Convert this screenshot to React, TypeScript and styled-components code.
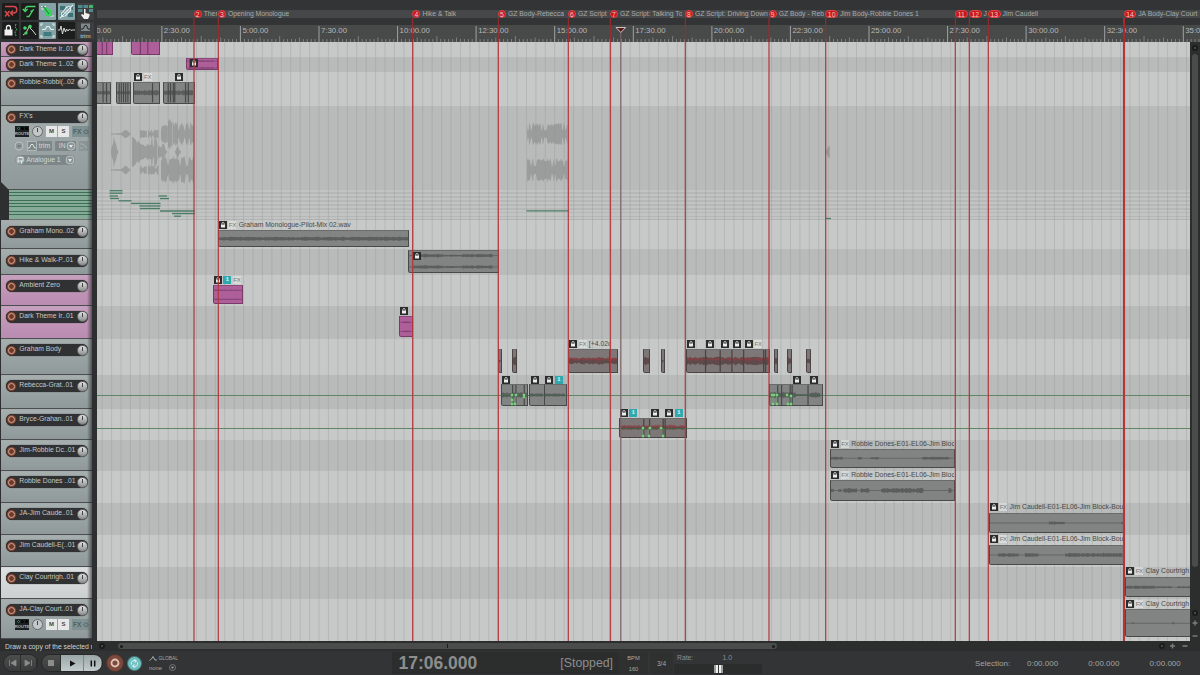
import React from 'react';
import styled, { createGlobalStyle, css } from 'styled-components';

const Global = createGlobalStyle`
  * { box-sizing: border-box; }
  body { margin: 0; background: #333; overflow: hidden; }
  #root { font-family: "Liberation Sans", Arial, sans-serif; }
`;

/* ---------- time mapping ---------- */
const LEFT = 97;
const ORIGIN = 83.3;
const STEP = 78.57;
const px = (x: number) => x - LEFT;

/* ---------- frame ---------- */
const Window = styled.div`
  width: 1200px; height: 675px; display: grid;
  grid-template-rows: 641px 10px 24px;
  background: #333435; color: #b4b4b4; font-size: 6.8px; overflow: hidden;
`;
const Workspace = styled.div`display: grid; grid-template-columns: 97px 1103px; min-height: 0;`;
const Sidebar = styled.div`display: grid; grid-template-rows: 42px 599px; background: #2e2f30; overflow: hidden;`;
const Arrange = styled.div`position: relative; display: grid; grid-template-rows: 42px 599px; overflow: hidden;`;

/* ---------- toolbar ---------- */
const Toolbar = styled.div`
  display: grid; grid-template-columns: repeat(5, 17px); grid-template-rows: 17px 17px;
  column-gap: 1.7px; row-gap: 2px; padding: 3px 0 0 2px; background: #333435;
`;
const Tool = styled.div<{ $on?: boolean; $flat?: boolean }>`
  background: ${p => (p.$on ? '#83a3a7' : p.$flat ? '#3c3e3f' : '#1c1d1d')};
  border-radius: 1px; overflow: hidden;
  svg { display: block; width: 17px; height: 17px; }
`;

/* ---------- track panel ---------- */
const Tracks = styled.div`padding-left: 1px; width: 92px; display: flex; flex-direction: column; position: relative;
  &::after { content: ''; position: absolute; right: 0; top: 0; width: 5px; height: 597px;
    background: linear-gradient(90deg, rgba(30,30,30,0), rgba(30,30,30,.6)); }
`;
type Tone = 'grey' | 'pink' | 'white';
const tones: Record<Tone, string> = {
  grey: 'linear-gradient(#a6aeae, #8f9999)',
  pink: 'linear-gradient(#c7a0bf, #b98bb0)',
  white: 'linear-gradient(#dde0e0, #ccd0d0)',
};
const Track = styled.div<{ $h: number; $tone: Tone; $pad: number }>`
  height: ${p => p.$h}px; padding: ${p => p.$pad}px 0 0 5px; flex: none;
  background: ${p => tones[p.$tone]}; border-bottom: 1px solid #4b4f4f; border-top: 1px solid rgba(255,255,255,.18);
  overflow: hidden;
`;
const NamePlate = styled.div`
  width: 82px; height: 12px; border-radius: 6px; background: #303132; display: flex; align-items: center;
  justify-content: space-between; box-shadow: 0 0 1px #222;
`;
const Arm = styled.div`
  width: 11px; height: 11px; border-radius: 50%; background: #7a4a3b; border: 1px solid #3e2a22; flex: none;
  display: grid; place-items: center;
  &::after { content: ''; width: 5px; height: 5px; border-radius: 50%; border: 1.5px solid #dea48e; background: #6b3c2d; }
`;
const TrackName = styled.div`
  flex: 1; color: #c6c9c9; line-height: 8px; padding: 0 0 2px 2.3px; white-space: nowrap; overflow: hidden;
`;
const Knob = styled.div<{ $small?: boolean }>`
  width: 11px; height: 11px; border-radius: 50%; flex: none;
  background: ${p => (p.$small ? '#c4c8c8' : 'linear-gradient(#e2e2e2, #8a8c8c)')}; border: 1px solid #666a6a;
  display: flex; justify-content: center;
  &::after { content: ''; width: 1px; height: 4px; margin-top: 1px; background: #444; }
`;
const Controls = styled.div`display: flex; align-items: center; height: 12px; margin: 2px 0 0 9px; gap: 3px;`;
const Route = styled.div`
  width: 14px; height: 11px; background: #1d2020; color: #b5b5b5; font-size: 4.2px; font-weight: bold; line-height: 4px;
  display: flex; flex-direction: column; align-items: center; justify-content: space-between; padding: 1px 0;
`;
const Leds = styled.div`display: flex; gap: 1px; i { width: 3px; height: 3px; border-radius: 50%; background: #000; }
  i:first-child { border: 1px solid #2b8a5e; }`;
const MuteSolo = styled.div`
  display: grid; grid-template-columns: 11px 11px; gap: 1px; height: 11px; font-weight: bold; font-size: 6px;
  span { background: #e6e8e8; color: #444; text-align: center; line-height: 11px; }
`;
const FxButton = styled.div`
  width: 17px; height: 11px; background: #7f9191; color: #39494a; font-size: 6.5px; line-height: 11px; padding-left: 1px;
  display: flex; align-items: center; gap: 1.5px;
`;
const InputRow = styled.div<{ $indent: number }>`
  display: flex; align-items: center; gap: 3px; height: 11px; margin: 3px 0 0 ${p => p.$indent}px; color: #d3d8d8;
`;
const Chip = styled.div<{ $w: number; $round?: boolean }>`
  width: ${p => p.$w}px; height: 10px; background: #7d8787; border-radius: ${p => (p.$round ? 5 : 1)}px; display: flex;
  align-items: center; justify-content: space-between; line-height: 10px; white-space: nowrap; flex: none;
  svg { width: 10px; height: 10px; display: block; flex: none; }
`;
const Lanes = styled.div`
  height: 30px; margin-left: 8px; flex: none; border-bottom: 1px solid #6b7373;
  background: repeating-linear-gradient(#86aa98 0 2px, #3d6f57 2px 2.75px);
`;
const TrackWithLanes = styled.div`background: #2e2f30; position: relative;
  &::before { content: ''; position: absolute; left: 0; bottom: 30px; width: 8px; height: 8px;
    background: #2e2f30; clip-path: polygon(0 0, 100% 100%, 0 100%); }
`;

/* ---------- ruler ---------- */
const Ruler = styled.div`
  position: relative; display: grid; grid-template-rows: 10px 8px 7px 17px; background: #333435;
  div:nth-child(2) { background: #464748; } div:nth-child(4) { background: #484949; }
  > svg { position: absolute; left: 0; top: 25px; }
`;
const TimeLabel = styled.span`position: absolute; top: 25.5px; font-size: 7.8px; line-height: 9px; color: #b6b8b8; white-space: nowrap;`;

/* ---------- timeline ---------- */
const Body = styled.div`display: grid; grid-template-columns: 1093px 10px; min-height: 0;`;
const Timeline = styled.div`position: relative; overflow: hidden; background: #c5c8c6;`;
const Lane = styled.div<{ $h: number; $dark?: boolean }>`
  height: ${p => p.$h}px; position: relative; background: ${p => (p.$dark ? '#b8bbb9' : '#c6c9c7')};
`;
const MidiLanes = styled.div`
  height: 30px; background: repeating-linear-gradient(#c1c4c2 0 2.4px, #b5b8b6 2.4px 3.9px); border-bottom: 1px solid #b0b3b1;
`;
const Overlay = styled.svg`position: absolute; left: 0; top: 0; pointer-events: none;`;

type ClipKind = 'grey' | 'pink' | 'warm';
const clipColors: Record<ClipKind, [string, string, string]> = {
  grey: ['#828484', '#484a4a', '#5c5e5e'],
  pink: ['#ae5f9a', '#793a69', '#804274'],
  warm: ['#7e7777', '#4b4444', '#5e4a4b'],
};
const ClipBox = styled.div<{ $kind: ClipKind }>`
  position: absolute; background: ${p => clipColors[p.$kind][0]}; border: 1px solid ${p => clipColors[p.$kind][1]};
  border-top-color: #6a6c6c; border-bottom-left-radius: 2.5px; overflow: hidden;
  ${p => p.$kind === 'pink' && css`border-top-color: #8c4a7b;`}
  svg { display: block; width: 100%; height: 100%; }
`;
const Header = styled.div`position: absolute; height: 8px; display: flex; align-items: center; gap: 1.7px; overflow: hidden; white-space: nowrap;`;
const LockBadge = styled.div`width: 8px; height: 8px; background: #2b2c2c; flex: none; svg { display: block; }`;
const TakeBadge = styled.div`width: 8px; height: 8px; background: #2fa9ae; color: #d9f2f2; font: bold 6px/8px "Liberation Mono", monospace; text-align: center; flex: none;`;
const FxBadge = styled.div`width: 8px; height: 8px; background: rgba(222,224,222,.75); color: #747676; font-size: 6px; line-height: 8px; letter-spacing: -.2px; text-align: center; flex: none;`;
const ClipTitle = styled.div`font-size: 6.8px; line-height: 8px; color: #464848; padding: 0 0 0 .6px;`;

/* ---------- markers ---------- */
const Flag = styled.div<{ $wide?: boolean }>`
  position: absolute; top: 10px; height: 8px; display: flex; align-items: center; gap: 2px; overflow: hidden; white-space: nowrap;
  font-size: 6.8px; color: #a9abab; line-height: 8px; background: #464748;
  b { width: ${p => (p.$wide ? 12.5 : 8)}px; height: 8px; border-radius: 4px; background: #c3171b; color: #f3caca; text-align: center;
    font-weight: normal; font-size: 6.8px; flex: none; border: .5px solid #e04444; line-height: 7px; }
`;

/* ---------- scrollbars ---------- */
const VScroll = styled.div`
  background: #2c2d2d; display: flex; flex-direction: column; align-items: center; padding-top: 2px;
  svg { display: block; flex: none; }
`;
const VThumb = styled.div`width: 6px; height: 513px; border-radius: 3px; background: #4a4b4b; margin: 2px 0 42px; flex: none;`;
const VGap = styled.div<{ $h: number }>`height: ${p => p.$h}px; flex: none;`;
const BottomBar = styled.div`display: grid; grid-template-columns: 92px 26px 659px 1fr 42.5px; align-items: center; background: #2c2d2d;`;
const Status = styled.div`padding-left: 5px; color: #d0d2d2; overflow: hidden; white-space: nowrap; line-height: 9px;`;
const HThumb = styled.div`height: 6px; border-radius: 3px; background: #4a4b4b; display: flex; justify-content: space-between; align-items: center; padding: 0 2px;
  i { width: 3px; height: 3px; border-radius: 50%; background: #1b1c1c; } i:nth-child(2) { width: 1px; height: 4px; border-radius: 0; }`;

/* ---------- transport ---------- */
const Transport = styled.div`display: flex; align-items: center; padding-left: 3px; background: #333435; height: 24px;`;
const Pill = styled.div<{ $ml?: number }>`
  display: flex; height: 18px; border-radius: 9px; overflow: hidden; margin-left: ${p => p.$ml || 0}px; border: 1px solid #262727; flex: none;
`;
const Key = styled.div<{ $w: number; $lit?: boolean }>`
  width: ${p => p.$w}px; background: ${p => (p.$lit ? 'linear-gradient(#9aa6a8, #c3cbcc)' : 'linear-gradient(#4c4d4d, #3a3b3b)')};
  border-right: 1px solid ${p => (p.$lit ? '#7d8888' : '#2d2e2e')}; display: grid; place-items: center;
`;
const Round = styled.div<{ $c: string; $s: number; $ml: number }>`
  width: ${p => p.$s}px; height: ${p => p.$s}px; border-radius: 50%; background: ${p => p.$c}; margin-left: ${p => p.$ml}px;
  display: grid; place-items: center; border: 1px solid rgba(20,20,20,.4); flex: none;
`;
const Automation = styled.div`margin-left: 7px; width: 29px; font-size: 4.9px; line-height: 8px; color: #a6a8a8; flex: none;
  div { display: flex; align-items: center; justify-content: space-between; height: 9px; }
  div + div { font-size: 5.8px; padding-right: 2px; }`;
const Display = styled.div`
  margin-left: 214px; width: 227px; height: 22px; background: #2c2d2d; display: flex; justify-content: space-between;
  align-items: center; padding: 0 6px 0 6.5px; flex: none;
  strong { font-size: 17.5px; color: #8c8e8e; } span { font-size: 12.3px; color: #8c8e8e; }
`;
const Box = styled.div<{ $w: number; $ml: number }>`
  width: ${p => p.$w}px; height: 22px; margin-left: ${p => p.$ml}px; background: #2f3030; display: flex; flex-direction: column;
  align-items: center; justify-content: space-around; font-size: 5.8px; color: #a5a7a7; flex: none;
  &:last-of-type { font-size: 6.5px; }
`;
const Rate = styled.section`width: 88px; margin-left: 1px; font-size: 6.8px; color: #8d8f8f; flex: none;
  p { margin: 0; display: flex; justify-content: space-between; padding: 0 30px 0 3px; height: 9px; line-height: 9px; }`;
const Slider = styled.div`height: 10px; background: #2b2c2c; padding: 1px 0 0 40px; margin-top: 2px;
  i { display: block; width: 9px; height: 8px; background: linear-gradient(90deg, #9c9c9c 0 2px, #eee 2px 4px, #333 4px 5px, #eee 5px 7px, #9c9c9c 7px); }`;
const Selection = styled.section`
  margin-left: 213px; display: grid; grid-template-columns: 52px 61.3px 61.3px 50px; font-size: 8px; color: #a3a5a5; white-space: nowrap;
`;

/* ---------- glyphs ---------- */
const Lock = () => (
  <LockBadge>
    <svg width="8" height="8" viewBox="0 0 8 8">
      <path d="M2.8 4V2.7a1.2 1.2 0 0 1 2.4 0V4" fill="none" stroke="#eee" strokeWidth=".8" />
      <rect x="2" y="3.7" width="4" height="2.8" fill="#eee" />
    </svg>
  </LockBadge>
);
const Dot = () => (
  <svg width="8" height="8" viewBox="0 0 8 8"><circle cx="4" cy="4" r="3" fill="#1b1c1c" /><circle cx="4" cy="4" r="1" fill="#555" /></svg>
);
const Plus = ({ minus }: { minus?: boolean }) => (
  <svg width="8" height="8" viewBox="0 0 8 8">
    <path d={minus ? 'M1.5 4h5' : 'M1.5 4h5M4 1.5v5'} stroke="#7c7e7e" strokeWidth="1.4" />
  </svg>
);
const Down = () => (
  <svg viewBox="0 0 10 10"><circle cx="5" cy="5" r="4" fill="#8c9696" stroke="#c7cdcd" strokeWidth=".8" /><path d="M3 4h4L5 7z" fill="#e6eaea" /></svg>
);

/* ---------- waveform ---------- */
type Burst = [number, number, number];
const rand = (n: number) => {
  const v = Math.sin(n * 127.1 + 11.7) * 43758.5453;
  return v - Math.floor(v);
};
type Shape = 'flat' | 'comb' | 'bulge' | 'fade';
const envelope = (shape: Shape, t: number, x: number, seed: number) => {
  if (shape === 'bulge') return Math.max(0.08, 1 - Math.abs(t - 0.45) * 2);
  if (shape === 'fade') return 1 - t * 0.75;
  if (shape === 'comb') return rand(Math.floor(x / 1.5) + seed) > 0.82 ? 0.4 : 1;
  return 1;
};
const burstPath = (x0: number, x1: number, cy: number, amp: number, seed: number, flat = 0.35, shape: Shape = 'flat') => {
  const top: string[] = [];
  const bottom: string[] = [];
  const step = shape === 'comb' ? 0.75 : 1;
  for (let x = x0; x <= x1; x += step) {
    const a = amp * (flat + (1 - flat) * rand(x * 3.1 + seed)) * envelope(shape, (x - x0) / (x1 - x0 || 1), x, seed);
    top.push(`${x.toFixed(1)} ${(cy - a).toFixed(2)}`);
    bottom.unshift(`${x.toFixed(1)} ${(cy + a).toFixed(2)}`);
  }
  return `M${top.join('L')}L${bottom.join('L')}Z`;
};

interface ClipData {
  x: number; x2: number; y: number; h: number; kind?: ClipKind; splits?: number[];
  rows?: number[]; bursts?: Burst[]; red?: boolean;
}
const Clip = ({ x, x2, y, h, kind = 'grey', splits = [], rows = [0.5], bursts = [[0, 1, 1.6]], red }: ClipData) => {
  const w = x2 - x;
  const [, edge, wave] = clipColors[kind];
  return (
    <ClipBox $kind={kind} style={{ left: px(x), top: y, width: w, height: h }}>
      <svg viewBox={`0 0 ${w} ${h}`} preserveAspectRatio="none">
        {rows.map(r => (
          <g key={r}>
            <path d={`M0 ${h * r}H${w}`} stroke={wave} strokeWidth=".8" />
            {bursts.map(([a, b, amp], i) => (
              <path key={i} d={burstPath(a * w, b * w, h * r, amp, x + i, 0.5)} fill={wave} />
            ))}
          </g>
        ))}
        {red && <path d={burstPath(0, w, h * 0.42, 2.4, x + 5, 0.1)} fill="#8b3f41" opacity=".7" />}
        {splits.map(s => (
          <path key={s} d={`M${s - x} 0V${h}`} stroke={edge} strokeWidth="1.3" />
        ))}
      </svg>
    </ClipBox>
  );
};

interface HeaderData { x: number; y: number; w?: number; lock?: boolean; take?: boolean; fx?: boolean; title?: string }
const ClipHeader = ({ x, y, w = 60, lock = true, take, fx, title }: HeaderData) => (
  <Header style={{ left: px(x) - 0.4, top: y, width: w }}>
    {lock && <Lock />}
    {take && <TakeBadge>1</TakeBadge>}
    {fx && <FxBadge>FX</FxBadge>}
    {title && <ClipTitle>{title}</ClipTitle>}
  </Header>
);

/* ---------- data ---------- */
interface TrackData {
  name: string; h: number; dark?: boolean; tone?: Tone; pad?: number; kind?: 'fx' | 'last';
  clips?: ClipData[]; heads?: HeaderData[];
}
const tracks: TrackData[] = [
  { name: 'Dark Theme Ir..01', h: 15, tone: 'pink', pad: 0.5,
    clips: [
      { x: 96, x2: 112.5, y: -4, h: 17, kind: 'pink', splits: [102, 107], rows: [] },
      { x: 131, x2: 160, y: -4, h: 17, kind: 'pink', splits: [140, 148], rows: [] },
    ] },
  { name: 'Dark Theme 1..02', h: 15, dark: true, tone: 'pink', pad: 0.5,
    clips: [{ x: 186, x2: 218, y: 0.6, h: 12.5, kind: 'pink', rows: [0.2, 0.85], bursts: [[0.1, 0.9, 0.8]], splits: [189] }],
    heads: [{ x: 190.8, y: 2, w: 8 }] },
  { name: 'Robbie-Robbi(..02', h: 34, pad: 4,
    clips: [
      { x: 96, x2: 111, y: 10, h: 21.5, splits: [103, 107], bursts: [[0, 1, 2.4]] },
      { x: 115.5, x2: 131, y: 10, h: 21.5, splits: [118, 120.5, 123, 125.5, 128], bursts: [[0, 1, 2]] },
      { x: 132.5, x2: 160, y: 10, h: 21.5, splits: [152.5], bursts: [[0, 1, 3]] },
      { x: 163, x2: 194.5, y: 10, h: 21.5, splits: [167.5, 170, 173, 174.5, 186, 189], bursts: [[0, 1, 3]] },
    ],
    heads: [{ x: 134.4, y: 1, fx: true }, { x: 175.4, y: 1, w: 8 }] },
  { name: "FX's", h: 84, dark: true, pad: 4, kind: 'fx' },
  { name: 'Graham Mono..02', h: 29, pad: 4.5,
    clips: [{ x: 217.5, x2: 409, y: 9.5, h: 17.5, bursts: [[0, 1, 2.4]] }],
    heads: [{ x: 219.2, y: 1, w: 180, fx: true, title: 'Graham Monologue-Pilot-Mix 02.wav' }] },
  { name: 'Hike & Walk-P..01', h: 26, dark: true, pad: 4.5,
    clips: [{ x: 407.5, x2: 498.5, y: 1, h: 23, rows: [0.22, 0.76], bursts: [[0.05, 0.4, 2], [0.4, 0.6, 1.2], [0.6, 0.95, 2]] }],
    heads: [{ x: 413.4, y: 2.5, w: 8 }] },
  { name: 'Ambient Zero', h: 30.5, tone: 'pink', pad: 4,
    clips: [{ x: 212.5, x2: 242.5, y: 10, h: 19, kind: 'pink', rows: [0.25, 0.78], bursts: [[0, 1, 0.5]] }],
    heads: [{ x: 214, y: 1.2, take: true, fx: true }] },
  { name: 'Dark Theme Ir..01', h: 33.5, dark: true, tone: 'pink', pad: 4,
    clips: [{ x: 399, x2: 413, y: 10.2, h: 21, kind: 'pink', rows: [0.28, 0.76], bursts: [[0.2, 0.9, 1]] }],
    heads: [{ x: 400.4, y: 1, w: 8 }] },
  { name: 'Graham Body', h: 36, pad: 4,
    clips: [
      { x: 498, x2: 501.5, y: 9.7, h: 24, kind: 'warm' },
      { x: 512, x2: 517, y: 9.7, h: 24, kind: 'warm', bursts: [[0, 1, 5]] },
      { x: 567.5, x2: 618, y: 9.7, h: 24, kind: 'warm', bursts: [[0, 1, 4]], red: true, splits: [610] },
      { x: 643, x2: 650, y: 9.7, h: 24, kind: 'warm', bursts: [[0, 1, 5]] },
      { x: 661, x2: 664.7, y: 9.7, h: 24, kind: 'warm' },
      { x: 685.5, x2: 770, y: 9.7, h: 24, kind: 'warm', bursts: [[0, 1, 5]], red: true, splits: [704.5, 719.5, 731.5, 743.5, 764, 766] },
      { x: 774, x2: 778, y: 9.7, h: 24, kind: 'warm', bursts: [[0, 1, 5]] },
      { x: 787, x2: 792, y: 9.7, h: 24, kind: 'warm', bursts: [[0, 1, 5]] },
      { x: 806, x2: 811, y: 9.7, h: 24, kind: 'warm', bursts: [[0, 1, 3]] },
    ],
    heads: [
      { x: 569.3, y: 1, w: 41, fx: true, title: '[+4.02d' }, { x: 687, y: 1, w: 8 }, { x: 706, y: 1, w: 8 },
      { x: 720.9, y: 1, w: 8 }, { x: 732.9, y: 1, w: 8 }, { x: 744.9, y: 1, fx: true },
    ] },
  { name: 'Rebecca-Grat..01', h: 33.5, dark: true, pad: 4,
    clips: [
      { x: 500.5, x2: 528, y: 9.3, h: 22, splits: [512, 515.5, 524.5], bursts: [[0, 1, 3]] },
      { x: 529, x2: 544.5, y: 9.3, h: 22, bursts: [[0, 1, 2]] },
      { x: 544, x2: 566.5, y: 9.3, h: 22, bursts: [[0, 1, 2]] },
      { x: 769, x2: 823, y: 9.3, h: 22, splits: [777, 781, 790, 792, 808.5], bursts: [[0, 0.5, 3.5], [0.5, 0.74, 1], [0.76, 0.97, 3]] },
    ],
    heads: [{ x: 502.3, y: 1, w: 8 }, { x: 531, y: 1, w: 8 }, { x: 545.5, y: 1, take: true }, { x: 793, y: 1, w: 8 }, { x: 810, y: 1, w: 8 }] },
  { name: 'Bryce-Grahan..01', h: 31.5, pad: 4,
    clips: [{ x: 618.5, x2: 687, y: 9.5, h: 20, kind: 'warm', splits: [643, 649, 663, 665], bursts: [[0, 1, 2]], red: true }],
    heads: [{ x: 620, y: 0.5, take: true }, { x: 651, y: 0.5, w: 8 }, { x: 665.5, y: 0.5, take: true }] },
  { name: 'Jim-Robbie Dc..01', h: 31, dark: true, pad: 4,
    clips: [{ x: 830, x2: 954.5, y: 9, h: 18.5, bursts: [[0, 0.1, 1.8], [0.22, 0.26, 1.5], [0.32, 0.4, 1.5], [0.74, 0.97, 1.7]] }],
    heads: [{ x: 831.7, y: 0, w: 123, fx: true, title: 'Robbie Dones-E01-EL06-Jim Bloc' }] },
  { name: 'Robbie Dones ..01', h: 32, pad: 4,
    clips: [{ x: 830, x2: 954.5, y: 9, h: 21, bursts: [[0, 0.03, 2], [0.06, 0.09, 2], [0.1, 0.22, 3], [0.24, 0.32, 2.6], [0.41, 0.76, 3], [0.96, 0.99, 3.5]] }],
    heads: [{ x: 831.7, y: 0, w: 123, fx: true, title: 'Robbie Dones-E01-EL06-Jim Bloc' }] },
  { name: 'JA-Jim Caude..01', h: 32, dark: true, pad: 4,
    clips: [{ x: 988.5, x2: 1124.5, y: 9.5, h: 20, bursts: [[0.44, 0.56, 2], [0.98, 1, 1.5]] }],
    heads: [{ x: 990, y: 0.2, w: 134, fx: true, title: 'Jim Caudell-E01-EL06-Jim Block-Bou' }] },
  { name: 'Jim Caudell-E(..01', h: 32, pad: 4,
    clips: [{ x: 988.5, x2: 1124.5, y: 9.5, h: 20, bursts: [[0.06, 0.22, 2.2], [0.26, 0.37, 2.2], [0.56, 0.99, 2.4]] }],
    heads: [{ x: 990, y: 0.2, w: 134, fx: true, title: 'Jim Caudell-E01-EL06-Jim Block-Bou' }] },
  { name: 'Clay Courtrigh..01', h: 32, dark: true, tone: 'white', pad: 4,
    clips: [{ x: 1124.5, x2: 1200, y: 9.5, h: 20.5, bursts: [[0, 0.4, 2], [0.4, 0.63, 1], [0.7, 1, 1.2]] }],
    heads: [{ x: 1126, y: 0.2, w: 65, fx: true, title: 'Clay Courtrigh' }] },
  { name: 'JA-Clay Court..01', h: 42, pad: 4, kind: 'last',
    clips: [{ x: 1124.5, x2: 1200, y: 9.5, h: 28.5, bursts: [[0.08, 0.11, 1.5], [0.63, 0.66, 1.5]] }],
    heads: [{ x: 1126, y: 0.8, w: 65, fx: true, title: 'Clay Courtrigh' }] },
];

const markers: { n: number; x: number; label: string; end: number }[] = [
  { n: 2, x: 194, label: 'Ther', end: 217.8 }, { n: 3, x: 218.3, label: 'Opening Monologue', end: 300 },
  { n: 4, x: 412.7, label: 'Hike & Talk', end: 480 }, { n: 5, x: 498.3, label: 'GZ Body-Rebecca', end: 567.5 },
  { n: 6, x: 568.3, label: 'GZ Script', end: 609 }, { n: 7, x: 610.3, label: 'GZ Script: Talking To', end: 684.5 },
  { n: 8, x: 685.3, label: 'GZ Script: Driving Down', end: 768.5 }, { n: 9, x: 769, label: 'GZ Body - Reb', end: 825.5 },
  { n: 10, x: 825.7, label: 'Jim Body-Robbie Dones 1', end: 930 }, { n: 11, x: 955.3, label: '', end: 968.5 },
  { n: 12, x: 969.3, label: 'J', end: 988 }, { n: 13, x: 988.3, label: 'Jim Caudell', end: 1060 },
  { n: 14, x: 1124, label: 'JA Body-Clay Court', end: 1202 },
];
const labels = ['0:00.00', '2:30.00', '5:00.00', '7:30.00', '10:00.00', '12:30.00', '15:00.00', '17:30.00', '20:00.00', '22:30.00', '25:00.00', '27:30.00', '30:00.00', '32:30.00', '35:00.00'];
const notes: number[][] = [
  [109.5, 122.5, 190.7], [109.5, 122.5, 193.2], [109.5, 118, 196], [110, 119, 198.5], [118.5, 131.5, 200.8], [131, 160.5, 203.4],
  [139.5, 160.5, 206], [140, 160, 208.5], [160, 195, 211], [172, 195, 213.6], [174, 181, 216.2], [158.5, 167, 196], [160, 169, 198.6],
  [526.5, 569, 210.8], [826, 831, 218.5],
];
const fxBursts: [number, number, number, number, Shape][] = [
  [111, 122, 28, 0.8, 'flat'], [121, 131, 28, 6, 'bulge'], [111, 118, 46, 18, 'bulge'], [111, 122, 64, 0.8, 'flat'], [121, 131, 64, 6, 'bulge'],
  [140, 147, 28, 4.5, 'comb'], [148, 159, 28, 5, 'comb'], [140, 147, 64, 4.5, 'comb'], [148, 159, 64, 5, 'comb'],
  [132, 149, 46, 16, 'fade'], [140, 153, 46, 8, 'flat'], [150, 158, 46, 17, 'comb'], [158, 161, 46, 7, 'flat'], [160, 167, 46, 11, 'bulge'], [175, 181, 46, 7, 'bulge'],
  [161, 168, 28, 10, 'comb'], [168, 173, 28, 15, 'comb'], [173, 194, 28, 12, 'comb'], [161, 173, 64, 13, 'comb'], [173, 194, 64, 14.5, 'comb'],
  [527, 568, 28, 11.5, 'comb'], [527, 568, 64, 12.5, 'comb'], [826, 830, 46, 6, 'comb'],
];
const envPoints = [
  [512, 395], [516, 395], [524, 397], [512, 400], [512, 404], [515, 404], [524, 395], [643, 428], [650, 428], [661, 428], [643, 436], [649, 436], [663, 436],
  [772, 395], [774, 395], [777, 395], [773, 404], [777, 404], [787, 395], [791, 396], [788, 404], [791, 404],
];

/* ---------- composite parts ---------- */
const RouteRow = () => (
  <Controls>
    <Route><Leds><i /><i /><i /></Leds>ROUTE</Route>
    <Knob $small />
    <MuteSolo><span>M</span><span>S</span></MuteSolo>
    <FxButton>
      FX
      <svg width="6" height="7" viewBox="0 0 6 7"><path d="M1.7 2.2a2 2 0 1 0 2.600 0M3 1v2.500" fill="none" stroke="#4d6061" strokeWidth=".8" /></svg>
    </FxButton>
  </Controls>
);
const Env = () => (
  <svg viewBox="0 0 10 10"><rect x=".5" y=".5" width="9" height="9" fill="none" stroke="#c7cdcd" strokeWidth=".7" /><path d="M1 7h1.5L4 3.5h2L7.5 7H9" fill="none" stroke="#e6eaea" strokeWidth=".9" /></svg>
);
const Plug = () => (
  <svg viewBox="0 0 10 10"><circle cx="5" cy="5" r="4.600" fill="#98a2a2" /><path d="M3 8V2.500h5V6H3M6.500 6v2.500" fill="none" stroke="#eef1f1" strokeWidth=".9" /></svg>
);

const TrackPanel = () => (
  <Tracks>
    {tracks.map((t, i) => {
      const track = (
        <Track key={i} $h={t.kind === 'last' ? 40 : t.h} $tone={t.tone || 'grey'} $pad={t.pad || 4}>
          <NamePlate><Arm /><TrackName>{t.name}</TrackName><Knob /></NamePlate>
          {t.kind && <RouteRow />}
          {t.kind === 'fx' && (
            <>
              <InputRow $indent={8}>
                <svg width="10" height="10" viewBox="0 0 10 10"><circle cx="5" cy="5" r="4" fill="#8c9696" stroke="#c7cdcd" strokeWidth=".8" /><path d="M3.5 5h3" stroke="#5d6565" /></svg>
                <Chip $w={25}><Env />trim&nbsp;</Chip>
                <Chip $w={21}>&nbsp;&nbsp;IN<Down /></Chip>
                <svg width="9" height="10" viewBox="0 0 9 10"><rect width="9" height="10" fill="#8b9595" /><path d="M1 3h3l4 4M1 7h3" stroke="#a9b1b1" fill="none" /></svg>
              </InputRow>
              <InputRow $indent={9}>
                <Chip $w={60} $round><Plug /><span>Analogue 1</span><span>&nbsp;</span><Down /></Chip>
              </InputRow>
            </>
          )}
        </Track>
      );
      return t.kind === 'fx' ? <TrackWithLanes key={i}>{track}<Lanes /></TrackWithLanes> : track;
    })}
  </Tracks>
);

const Tools = () => (
  <Toolbar>
    <Tool><svg viewBox="0 0 17 17" fill="none" stroke="#d8494c" strokeWidth="1.500"><path d="M3 3.500h8.500a3 3 0 0 1 0 6.500H9M11 7.500L8.500 10l2.500 2.500M3 8l4.500 5.500M7.500 8L3 13.500" /></svg></Tool>
    <Tool><svg viewBox="0 0 17 17" fill="none" stroke="#46d264" strokeWidth="1.400"><path d="M14.500 3.500H7a2.800 2.800 0 0 0-2.800 2.800V8M1.800 6l2.400 2.500L6.600 6M5.500 13.500h2.500L12 7M9.500 8.500L13 6.500" /></svg></Tool>
    <Tool $on><svg viewBox="0 0 17 17"><path d="M2 3.500h5M2 6h3M11 13h4" stroke="#d9e4e4" /><path d="M4 3l9 4.500V13H7z" fill="#37d35c" /><path d="M4 3l6 8" stroke="#1c7a35" /></svg></Tool>
    <Tool $on><svg viewBox="0 0 17 17"><rect x="2" y="3" width="5" height="4" fill="#3f7276" /><rect x="10" y="3" width="5" height="4" fill="#3f7276" /><rect x="2" y="10" width="5" height="4" fill="#3f7276" /><rect x="10" y="10" width="5" height="4" fill="#3f7276" /><path d="M2 15L15 2M4.500 9.500l4-5q3-2 4 0t-1 4l-4 4q-3 2-4 0t1-3" stroke="#e6efef" strokeWidth="1.100" fill="none" /></svg></Tool>
    <Tool $flat><svg viewBox="0 0 17 17"><g fill="#4f8b8f"><rect x="1" y="2" width="4.500" height="3" /><rect x="6.500" y="2" width="4.500" height="3" /><rect x="12" y="2" width="4" height="3" fill="#46b26a" /><rect x="1" y="6" width="4.500" height="3" /><rect x="12" y="6" width="4" height="3" /></g><path d="M7 16l-3-4 1-1 2 1V6h1.500v4l4 1v2l-1.500 3z" fill="#f0f0f0" /></svg></Tool>
    <Tool><svg viewBox="0 0 17 17"><path d="M4.500 8V5.500a2 2 0 0 1 4 0V8" fill="none" stroke="#f0f0f0" strokeWidth="1.300" /><rect x="2.500" y="7.500" width="8" height="6" fill="#f0f0f0" /><path d="M14 2l-1 3 2 2-2 3 1 4" stroke="#46b26a" fill="none" strokeDasharray="2 1" /></svg></Tool>
    <Tool><svg viewBox="0 0 17 17"><path d="M2 13l3-2 3-6 4 4 3 4" stroke="#cfd6cf" fill="none" /><g fill="#46d264"><circle cx="4" cy="6" r="1.800" /><circle cx="9" cy="4.500" r="1.800" /><circle cx="5" cy="11" r="1.600" /></g></svg></Tool>
    <Tool $on><svg viewBox="0 0 17 17"><path d="M3 7.500h3l2-3h2l2 3h3" stroke="#e8f0f0" fill="none" strokeWidth="1.200" /><rect x="4.500" y="10" width="8" height="4" fill="#3f7c82" /><path d="M2 4V2h2M13 2h2v2M15 13v2h-2M4 15H2v-2" fill="none" stroke="#dce8e8" strokeWidth="1.200" /></svg></Tool>
    <Tool><svg viewBox="0 0 17 17"><path d="M0 8h2l1-4 1.500 8 1.500-6 1.500 4 1-3 1.500 2 1.500-2 1.500 1.500L14 8h3" stroke="#e4e6e6" strokeWidth=".9" fill="none" /></svg></Tool>
    <Tool $flat><svg viewBox="0 0 17 17"><rect x="4" y="1.500" width="9" height="7.500" fill="#7f898b" /><path d="M4 7h2l2-3.500h1.500L11 7h2" stroke="#222" fill="none" /><text x="8.500" y="15.500" fontSize="6.200" fill="#cfd1d1" textAnchor="middle">trim</text></svg></Tool>
  </Toolbar>
);

const ticks = (() => {
  let small = ''; let big = '';
  for (let i = 0; i <= 290; i++) {
    const x = (ORIGIN - LEFT + (i * STEP) / 20).toFixed(1);
    if (i % 20 === 0) big += `M${x} 1V17`;
    else small += `M${x} ${i % 10 === 0 ? 11 : i % 5 === 0 ? 12.500 : 14}V17`;
  }
  return { small, big };
})();
const gridPath = (() => {
  let d = '';
  for (let x = ORIGIN; x < 1190; x += STEP / 8.333) if (x > LEFT) d += `M${px(x).toFixed(1)} 0V599`;
  return d;
})();

const ArrangeView = () => (
  <Arrange>
    <Ruler>
      <div /><div /><div /><div />
      <svg width="1103" height="17"><path d={ticks.small} stroke="#8b8d8d" strokeWidth=".8" /><path d={ticks.big} stroke="#a0a2a2" strokeWidth="1" /></svg>
      {labels.map((l, i) => <TimeLabel key={l} style={{ left: px(ORIGIN + i * STEP + 2) }}>{l}</TimeLabel>)}
    </Ruler>
    <Body>
      <Timeline>
        {tracks.map((t, i) => (
          <React.Fragment key={i}>
            <Lane $h={t.h} $dark={t.dark}>
              {t.kind === 'fx' && (
                <Overlay width="1093" height="84">
                  {fxBursts.map(([a, b, y, amp, shape], k) => <path key={k} d={burstPath(px(a), px(b), y, amp, k * 7, 0.65, shape)} fill="#9b9d9c" />)}
                </Overlay>
              )}
            </Lane>
            {t.kind === 'fx' && <MidiLanes />}
          </React.Fragment>
        ))}
        <Overlay width="1093" height="599">
          <path d={gridPath} stroke="#8f9391" strokeWidth="1" opacity=".32" />
          {notes.map(([a, b, y], i) => <path key={i} d={`M${px(a)} ${y - 42}H${px(b)}`} stroke="#4b7d66" strokeWidth="1.300" />)}
          <path d="M0 353.500H1093M0 386.500H1093" stroke="#5f8764" strokeWidth="1" />
        </Overlay>
        <ClipLayer />
      </Timeline>
      <VScroll><Dot /><VThumb /><Dot /><VGap $h={2} /><Plus /><VGap $h={5} /><Plus minus /></VScroll>
    </Body>
    {markers.map(m => (
      <Flag key={m.n} $wide={m.n > 9} style={{ left: px(m.x) - 0.3, maxWidth: m.end - m.x }}><b>{m.n}</b>{m.label}</Flag>
    ))}
    <Overlay width="1103" height="641">
      {markers.map(m => (
        <g key={m.n}>
          <path d={`M${px(m.x)} 18V42`} stroke="#a8282c" strokeWidth={m.n === 14 ? 2 : 1} />
          <path d={`M${px(m.x)} 42V641`} stroke="#b3363a" strokeWidth={m.n === 14 ? 2.200 : 1.200} />
        </g>
      ))}
      <path d={`M${px(620.8)} 33V641`} stroke="#7d6468" strokeWidth="1.200" />
      <path d={`M${px(616)} 27.500h9.600l-4.800 5z`} fill="#5d1719" stroke="#d8d8d8" strokeWidth=".9" />
    </Overlay>
  </Arrange>
);

const LayerRow = styled.div<{ $h: number }>`height: ${p => p.$h}px; position: relative;`;
const Layer = styled.div`position: absolute; left: 0; top: 0; width: 100%;`;
const ClipLayer = () => (
  <Layer>
    {tracks.map((t, i) => (
      <LayerRow key={i} $h={t.kind === 'fx' ? 114 : t.h}>
        {t.clips?.map((c, k) => <Clip key={k} {...c} />)}
        {t.heads?.map((c, k) => <ClipHeader key={k} {...c} />)}
      </LayerRow>
    ))}
    <Overlay width="1093" height="599">
      <path d={`M${px(501)} 353.500H${px(567)}M${px(769)} 353.500H${px(823)}M${px(618)} 386.500H${px(687)}`} stroke="#3f6644" strokeWidth=".8" />
      <path d={`M${px(512)} 353V362M${px(515.5)} 353V362M${px(643)} 386V394M${px(649)} 386V394M${px(663)} 386V394M${px(773)} 353V362M${px(777)} 353V362M${px(791)} 353V362`} stroke="#57b35e" strokeWidth=".6" />
      {envPoints.map(([x, y], i) => <circle key={i} cx={px(x)} cy={y - 42} r="1.200" fill="#b6ecb4" stroke="#4fae57" strokeWidth=".7" />)}
    </Overlay>
  </Layer>
);

export default function App() {
  return (
    <Window>
      <Global />
      <Workspace>
        <Sidebar><Tools /><TrackPanel /></Sidebar>
        <ArrangeView />
      </Workspace>
      <BottomBar>
        <Status>Draw a copy of the selected r</Status>
        <svg width="20" height="8" viewBox="0 0 20 8"><circle cx="10" cy="4" r="3" fill="#1b1c1c" /><circle cx="10" cy="4" r="1" fill="#555" /></svg>
        <HThumb><i /><i /><i /></HThumb>
        <span />
        <svg width="40" height="8" viewBox="0 0 40 8">
          <circle cx="4" cy="4" r="3" fill="#1b1c1c" /><circle cx="4" cy="4" r="1" fill="#555" />
          <path d="M12 4h5M14.500 1.500v5M24.500 4h5" stroke="#7c7e7e" strokeWidth="1.400" />
        </svg>
      </BottomBar>
      <Transport>
        <Pill>
          <Key $w={17}><svg width="9" height="8"><path d="M1.500 1v6M8 1L3 4l5 3z" stroke="#8b8d8d" fill="#8b8d8d" strokeWidth=".8" /></svg></Key>
          <Key $w={16}><svg width="9" height="8"><path d="M7.500 1v6M1 1l5 3-5 3z" stroke="#8b8d8d" fill="#8b8d8d" strokeWidth=".8" /></svg></Key>
        </Pill>
        <Pill $ml={3}>
          <Key $w={19}><svg width="6" height="6"><rect width="6" height="6" fill="#8b8d8d" /></svg></Key>
          <Key $w={23} $lit><svg width="7" height="7"><path d="M1 .5l5.500 3-5.500 3z" fill="#111" /></svg></Key>
          <Key $w={18} $lit><svg width="6" height="7"><path d="M1.300 .5v6M4.700 .5v6" stroke="#111" strokeWidth="1.500" /></svg></Key>
        </Pill>
        <Round $c="#7b4a3c" $s={18} $ml={3}><svg width="10" height="10"><circle cx="5" cy="5" r="3.500" fill="none" stroke="#e3c3b6" strokeWidth="1.800" /></svg></Round>
        <Round $c="#6fc0c2" $s={15} $ml={3}><svg width="9" height="9"><path d="M1.500 5.500a3 3 0 0 1 4.500-3.500M7.500 3.500A3 3 0 0 1 3 7M4.500 .5L6.500 2.200 4.500 3.500M4.500 5.500L2.500 7l2 1.500" fill="none" stroke="#eaf6f6" strokeWidth="1" /></svg></Round>
        <Automation>
          <div><svg width="8" height="7"><path d="M.5 5.500L2.500 4 4 1.500 6 5h2" stroke="#b5b7b7" fill="none" strokeWidth=".9" /></svg>GLOBAL</div>
          <div>none<svg width="7" height="7"><circle cx="3.500" cy="3.500" r="3" fill="none" stroke="#8b8d8d" strokeWidth=".7" /><path d="M2 2.700h3L3.500 5z" fill="#aaa" /></svg></div>
        </Automation>
        <Display><strong>17:06.000</strong><span>[Stopped]</span></Display>
        <Box $w={29} $ml={0}><span>BPM</span><span>160</span></Box>
        <Box $w={23} $ml={2}><span>3/4</span></Box>
        <Rate><p><span>Rate:</span><span>1.0</span></p><Slider><i /></Slider></Rate>
        <Selection><span>Selection:</span><span>0:00.000</span><span>0:00.000</span><span>0:00.000</span></Selection>
      </Transport>
    </Window>
  );
}
